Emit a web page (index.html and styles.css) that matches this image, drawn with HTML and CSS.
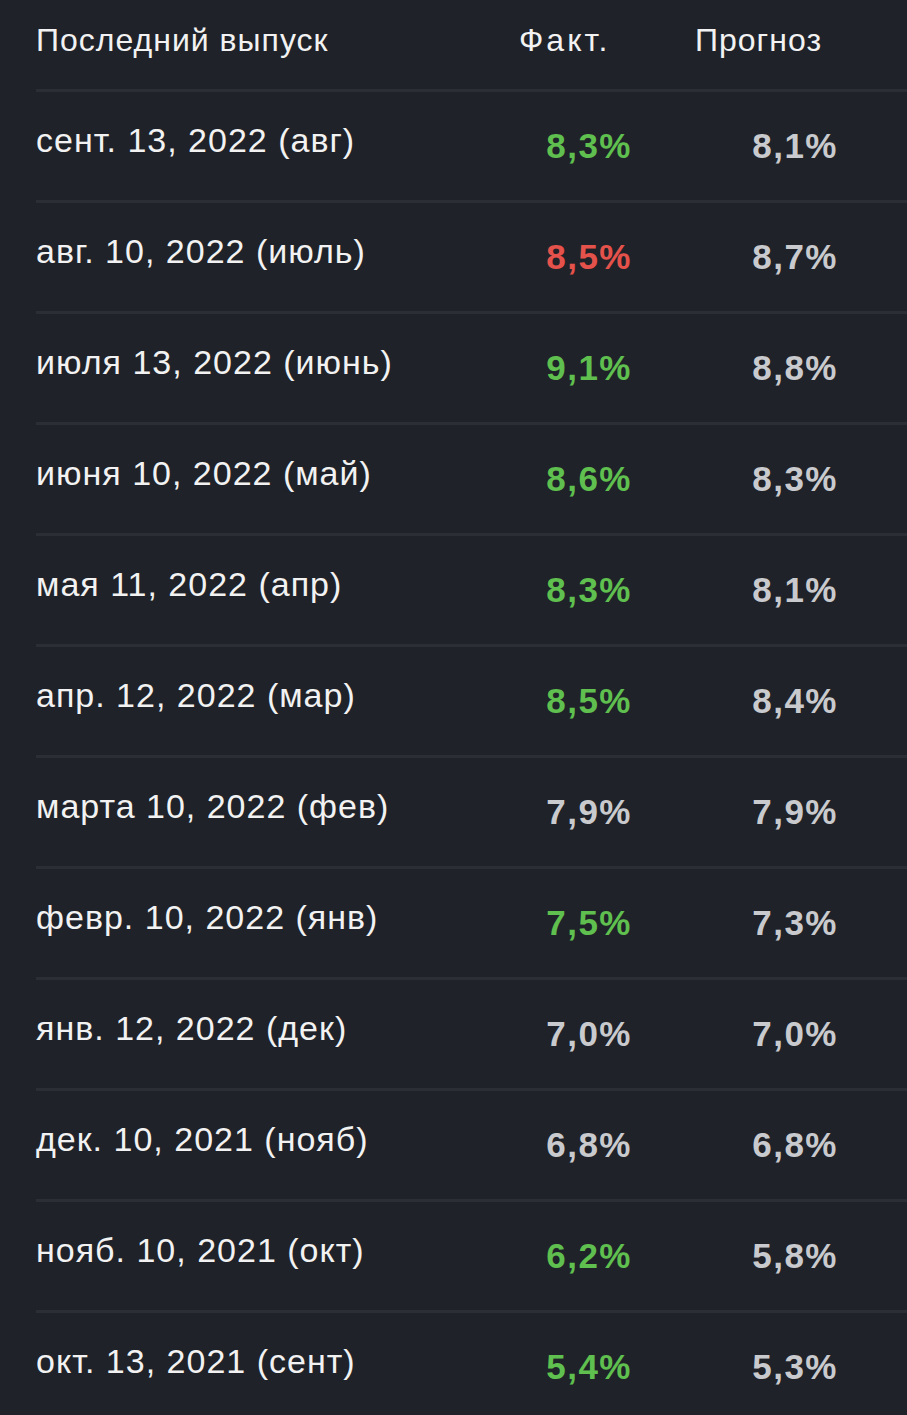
FILE: index.html
```html
<!DOCTYPE html>
<html lang="ru">
<head>
<meta charset="utf-8">
<title>Инфляция</title>
<link rel="stylesheet" href="styles.css">
</head>
<body>
<div class="table">
  <div class="row head">
    <div class="c-date">Последний выпуск</div>
    <div class="c-act">Факт.</div>
    <div class="c-fc">Прогноз</div>
  </div>
  <div class="row"><div class="c-date">сент. 13, 2022 (авг)</div><div class="c-act up">8,3%</div><div class="c-fc">8,1%</div></div>
  <div class="row"><div class="c-date">авг. 10, 2022 (июль)</div><div class="c-act down">8,5%</div><div class="c-fc">8,7%</div></div>
  <div class="row"><div class="c-date">июля 13, 2022 (июнь)</div><div class="c-act up">9,1%</div><div class="c-fc">8,8%</div></div>
  <div class="row"><div class="c-date">июня 10, 2022 (май)</div><div class="c-act up">8,6%</div><div class="c-fc">8,3%</div></div>
  <div class="row"><div class="c-date">мая 11, 2022 (апр)</div><div class="c-act up">8,3%</div><div class="c-fc">8,1%</div></div>
  <div class="row"><div class="c-date">апр. 12, 2022 (мар)</div><div class="c-act up">8,5%</div><div class="c-fc">8,4%</div></div>
  <div class="row"><div class="c-date">марта 10, 2022 (фев)</div><div class="c-act">7,9%</div><div class="c-fc">7,9%</div></div>
  <div class="row"><div class="c-date">февр. 10, 2022 (янв)</div><div class="c-act up">7,5%</div><div class="c-fc">7,3%</div></div>
  <div class="row"><div class="c-date">янв. 12, 2022 (дек)</div><div class="c-act">7,0%</div><div class="c-fc">7,0%</div></div>
  <div class="row"><div class="c-date">дек. 10, 2021 (нояб)</div><div class="c-act">6,8%</div><div class="c-fc">6,8%</div></div>
  <div class="row"><div class="c-date">нояб. 10, 2021 (окт)</div><div class="c-act up">6,2%</div><div class="c-fc">5,8%</div></div>
  <div class="row"><div class="c-date">окт. 13, 2021 (сент)</div><div class="c-act up">5,4%</div><div class="c-fc">5,3%</div></div>
</div>
</body>
</html>
```

FILE: styles.css
```css
html, body {
  margin: 0;
  padding: 0;
  background: #1f2228;
}
body {
  font-family: "Liberation Sans", Arial, sans-serif;
  color: #f2f2f2;
  overflow: hidden;
}
.table {
  padding-left: 36px;
}
.row {
  display: grid;
  grid-template-columns: 483px 176px 1fr;
  align-items: center;
  height: 108px;
  border-top: 3px solid #2b2e34;
}
.row .c-date {
  font-size: 34px;
  letter-spacing: 1px;
  margin-bottom: 12px;
  white-space: nowrap;
}
.row .c-act,
.row .c-fc {
  font-size: 35px;
  font-weight: bold;
  letter-spacing: 1.5px;
  color: #c9cacd;
  text-align: right;
}
.row .c-act {
  padding-right: 63px;
}
.row .c-fc {
  padding-right: 69px;
}
.row .c-act.up {
  color: #5fbf4f;
}
.row .c-act.down {
  color: #e4524b;
}
.row.head {
  height: 89px;
  border-top: none;
}
.row.head .c-date,
.row.head .c-act,
.row.head .c-fc {
  font-size: 32px;
  font-weight: normal;
  letter-spacing: 1px;
  color: #f2f2f2;
  text-align: left;
  padding-right: 0;
  margin-bottom: 8px;
}
.row.head .c-act {
  letter-spacing: 3px;
}
```
